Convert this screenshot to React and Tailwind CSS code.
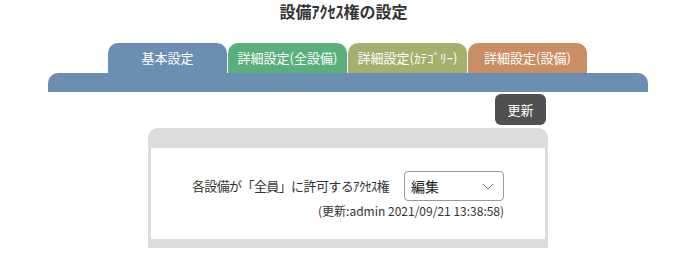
export default function App() {
  const tabs = [
    { label: '基本設定', color: 'bg-[#6b8fb2]' },
    { label: '詳細設定(全設備)', color: 'bg-[#5aaf7d]' },
    { label: '詳細設定(ｶﾃｺﾞﾘｰ)', color: 'bg-[#a5b06e]' },
    { label: '詳細設定(設備)', color: 'bg-[#c98e63]' },
  ];

  return (
    <div className="w-[687px] h-[271px] bg-white text-[#333] font-['Noto_Sans_CJK_JP','Noto_Sans',sans-serif]">
      {/* Title */}
      <h1 className="h-[22px] text-center text-[16px] font-bold leading-[22px]">設備ｱｸｾｽ権の設定</h1>

      {/* Tabs */}
      <div className="mt-[21px] ml-[48px] w-[600px]">
        <div className="flex gap-[1px] pl-[60px]">
          {tabs.map((t) => (
            <div
              key={t.label}
              className={`${t.color} w-[119px] h-[30px] rounded-t-[10px] flex items-center justify-center text-white text-[13px]`}
            >
              {t.label}
            </div>
          ))}
        </div>
        <div className="h-[19px] rounded-t-[10px] bg-[#6b8fb2]" />
      </div>

      {/* Update button */}
      <div className="mt-[2px] ml-[148px] w-[400px] flex justify-end pr-[2px]">
        <button className="w-[51px] h-[31px] rounded-[6px] bg-[#505050] text-white text-[13px]">更新</button>
      </div>

      {/* Panel */}
      <div className="mt-[3px] ml-[148px] w-[400px] rounded-t-[10px] bg-[#dcdcdc] px-[3px] pt-[20px] pb-[9px]">
        <div className="h-[91px] bg-white pt-[23px] flex justify-center">
          <div className="flex flex-col items-end">
            <div className="flex items-center">
              <span className="text-[13px] tracking-[-0.6px]">各設備が「全員」に許可するｱｸｾｽ権</span>
              <div className="ml-[15px] w-[100px] h-[30px] border border-[#9a9a9a] rounded-[4px] flex items-center justify-between pl-[6px] pr-[9px]">
                <span className="text-[14px] text-[#222]">編集</span>
                <svg width="12" height="7" viewBox="0 0 12 7" fill="none" stroke="#666" strokeWidth="1">
                  <path d="M1 1l5 5 5-5" />
                </svg>
              </div>
            </div>
            <div className="mt-[2px] text-[12px] leading-[16px]">(更新:admin 2021/09/21 13:38:58)</div>
          </div>
        </div>
      </div>
    </div>
  );
}
